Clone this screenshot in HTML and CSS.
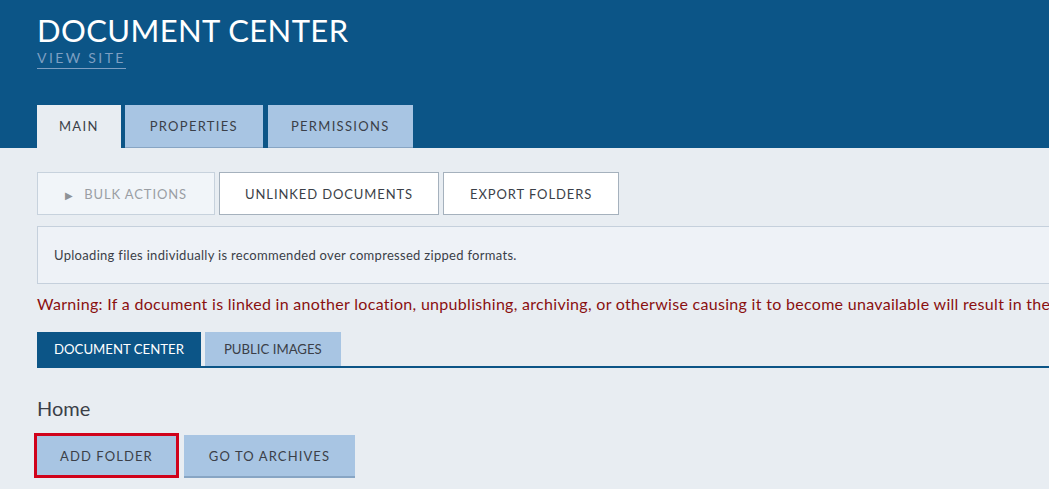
FILE: index.html
```html
<!DOCTYPE html>
<html lang="en">
<head>
    <meta charset="UTF-8">
    <meta name="viewport" content="width=device-width, initial-scale=1.0">
    <title>Document Center</title>
    <link rel="stylesheet" href="styles.css">
</head>
<body>
    <header class="site-header">
        <h1 class="page-title">DOCUMENT CENTER</h1>
        <a class="view-site" href="#">VIEW SITE</a>

        <nav class="main-tabs">
            <a class="main-tab active" href="#">MAIN</a>
            <a class="main-tab" href="#">PROPERTIES</a>
            <a class="main-tab" href="#">PERMISSIONS</a>
        </nav>
    </header>

    <main class="content">
        <div class="action-bar">
            <button class="action-button disabled"><span class="arrow">&#9654;</span> BULK ACTIONS</button>
            <button class="action-button">UNLINKED DOCUMENTS</button>
            <button class="action-button">EXPORT FOLDERS</button>
        </div>

        <div class="info-box">
            Uploading files individually is recommended over compressed zipped formats.
        </div>

        <p class="warning">
            Warning: If a document is linked in another location, unpublishing, archiving, or otherwise causing it to become unavailable will result in the link becoming broken.
        </p>

        <nav class="sub-tabs">
            <a class="sub-tab active" href="#">DOCUMENT CENTER</a>
            <a class="sub-tab" href="#">PUBLIC IMAGES</a>
        </nav>

        <h2 class="folder-title">Home</h2>

        <div class="folder-actions">
            <button class="folder-button focused">ADD FOLDER</button>
            <button class="folder-button">GO TO ARCHIVES</button>
        </div>
    </main>
</body>
</html>
```

FILE: styles.css
```css
:root {
    --header-blue: #0c5587;
    --tab-blue: #a8c5e3;
    --tab-border: #87a5c4;
    --page-bg: #e8edf2;
    --text-dark: #3b3f48;
    --warning-red: #8a1010;
}

* {
    margin: 0;
    padding: 0;
    box-sizing: border-box;
}

html, body {
    overflow: hidden;
}

body {
    font-family: Lato, "Open Sans", sans-serif;
    background: var(--page-bg);
    color: var(--text-dark);
    min-width: 1500px;
}

a {
    text-decoration: none;
}

button {
    font-family: inherit;
    cursor: pointer;
    white-space: nowrap;
}

/* header */
.site-header {
    background: var(--header-blue);
    padding: 11px 37px 0;
    height: 148px;
    display: flex;
    flex-direction: column;
    align-items: flex-start;
}

.page-title {
    color: #fff;
    font-size: 31px;
    font-weight: 400;
    letter-spacing: 0.4px;
    line-height: 38px;
}

.view-site {
    color: #7d9fc2;
    font-size: 14px;
    letter-spacing: 2.4px;
    line-height: 18px;
    border-bottom: 1px solid #7d9fc2;
    padding-bottom: 1px;
}

.main-tabs {
    display: flex;
    gap: 4px;
    margin-top: auto;
}

.main-tab {
    height: 43px;
    display: flex;
    align-items: center;
    padding: 0 25px;
    background: var(--tab-blue);
    border-bottom: 1px solid var(--tab-border);
    color: var(--text-dark);
    font-size: 13px;
    letter-spacing: 1.3px;
}

.main-tab:nth-child(3) {
    margin-left: 1px;
    padding: 0 23px;
}

.main-tab.active {
    background: var(--page-bg);
    border-bottom-color: var(--page-bg);
    padding: 0 22px;
}

/* content */
.content {
    padding: 24px 37px;
}

.action-bar {
    display: flex;
    gap: 4px;
}

.action-button {
    height: 43px;
    padding: 0 25px;
    background: #fff;
    border: 1px solid #a5b1bd;
    color: var(--text-dark);
    font-size: 13px;
    letter-spacing: 0.9px;
}

.action-button:nth-child(3) {
    padding: 0 26px;
}

.action-button.disabled {
    background: #f1f5f9;
    border-color: #c7d2dd;
    color: #9a9ea4;
    padding: 0 27px;
}

.action-button .arrow {
    font-size: 10px;
    margin-right: 6px;
    color: #8e9297;
}

.info-box {
    margin-top: 11px;
    height: 58px;
    display: flex;
    align-items: center;
    padding: 0 16px;
    background: #eef2f7;
    border: 1px solid #c5d0dc;
    font-size: 13px;
    letter-spacing: 0.3px;
}

.warning {
    margin-top: 10px;
    color: var(--warning-red);
    font-size: 16px;
    letter-spacing: 0.3px;
    line-height: 20px;
    white-space: nowrap;
}

.sub-tabs {
    display: flex;
    gap: 4px;
    margin-top: 18px;
    border-bottom: 2px solid var(--header-blue);
}

.sub-tab {
    height: 34px;
    display: flex;
    align-items: center;
    padding: 0 19px;
    background: var(--tab-blue);
    color: var(--text-dark);
    font-size: 13.2px;
}

.sub-tab.active {
    background: var(--header-blue);
    color: #fff;
    padding: 0 17px;
}

.folder-title {
    margin-top: 28px;
    font-size: 20px;
    font-weight: 400;
    line-height: 24px;
}

.folder-actions {
    display: flex;
    align-items: flex-end;
    gap: 5px;
    margin-top: 13px;
    margin-left: -3px;
}

.folder-button {
    height: 43px;
    padding: 0 25px;
    background: var(--tab-blue);
    border: none;
    border-bottom: 2px solid var(--tab-border);
    color: var(--text-dark);
    font-size: 13px;
    letter-spacing: 1.1px;
}

.folder-button.focused {
    height: 45px;
    border: 3px solid #d0021b;
    padding: 0 23px;
}
```
